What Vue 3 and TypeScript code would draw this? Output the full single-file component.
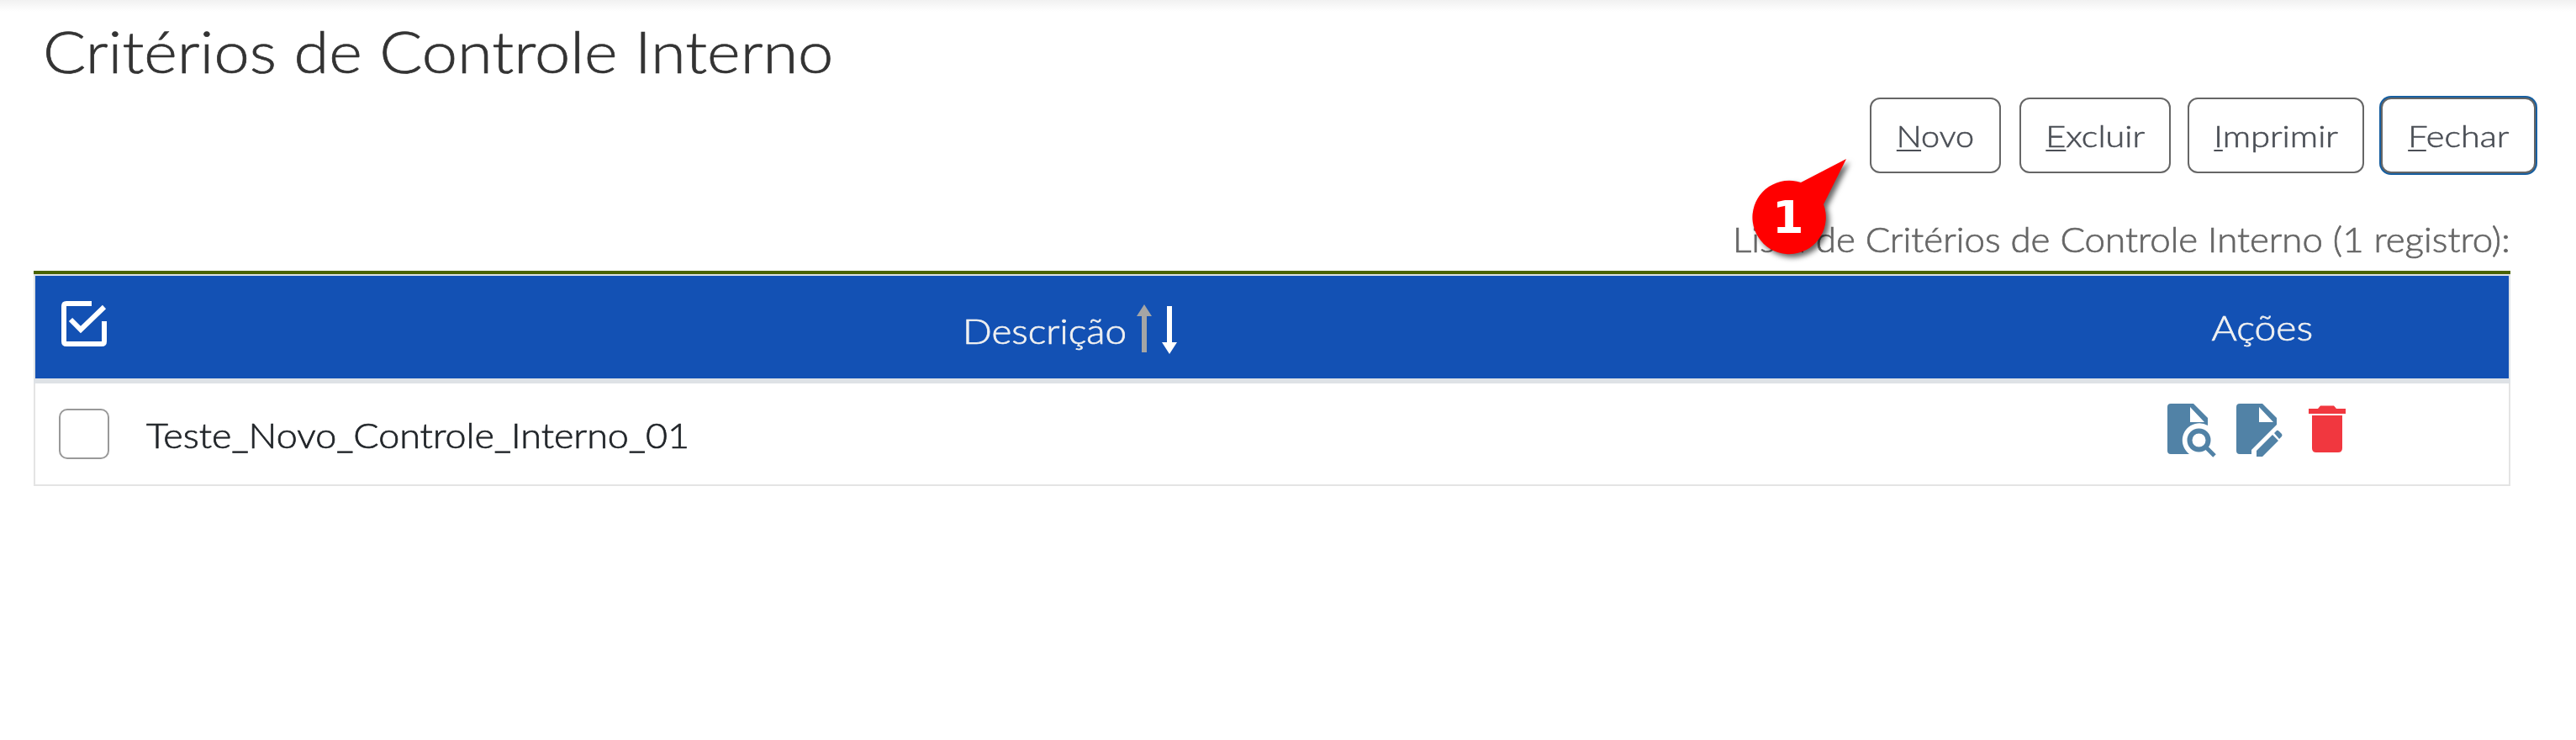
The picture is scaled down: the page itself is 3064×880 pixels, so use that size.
<script setup lang="ts">
interface ToolbarAction { key: string; rest: string; focused?: boolean }
const actions: ToolbarAction[] = [
  { key: 'N', rest: 'ovo' },
  { key: 'E', rest: 'xcluir' },
  { key: 'I', rest: 'mprimir' },
  { key: 'F', rest: 'echar', focused: true },
]
const rows: string[] = ['Teste_Novo_Controle_Interno_01']
</script>

<template>
  <main class="page">
    <h1><span class="title">Critérios de Controle Interno</span></h1>
    <div class="toolbar">
      <button v-for="a in actions" :key="a.key" :class="['btn', 'btn-' + a.key, { focused: a.focused }]"><span class="label"><u>{{ a.key }}</u>{{ a.rest }}</span></button>
    </div>
    <div class="count"><span class="count-text">Lista de Critérios de Controle Interno (1 registro):</span></div>
    <section class="table">
      <div class="row head">
        <div class="c1">
          <svg class="check" width="56" height="56" viewBox="0 0 56 56" fill="none" stroke="#fff" stroke-width="6"><path d="M37 4H7Q4 4 4 7V49Q4 52 7 52H49Q52 52 52 49V25" /><path d="M12 23L24 35L52 8" /></svg>
        </div>
        <div class="c2 center"><span class="desc">Descrição</span>
          <svg class="sort" width="52" height="62" viewBox="0 0 52 62"><path d="M10 1L19 15H13V58H7V15H1Z" fill="#a5a5a5" /><path d="M40 60L49 46H43V3H37V46H31Z" fill="#fff" /></svg>
        </div>
        <div class="c3 center"><span class="acoes">Ações</span></div>
      </div>
      <div v-for="r in rows" :key="r" class="row body">
        <div class="c1"><span class="box"></span></div>
        <div class="c2"><span class="name">{{ r }}</span></div>
        <div class="c3 icons">
          <svg width="58" height="64" viewBox="0 0 58 64" fill="#5182a6"><path fill-rule="evenodd" d="M4 0H31L48 17V26Q41 22 33 24C17 28 12 49 26 60H4Q0 60 0 56V4Q0 0 4 0ZM27 4V22H44Z" /><circle cx="37.500" cy="43.500" r="11" fill="none" stroke="#5182a6" stroke-width="6" /><path d="M45 51L56 62" stroke="#5182a6" stroke-width="5" /></svg>
          <svg width="56" height="64" viewBox="0 0 56 64" fill="#5182a6"><path fill-rule="evenodd" d="M4 0H31L48 17V25L18 55V60H4Q0 60 0 56V4Q0 0 4 0ZM27 4V22H44Z" /><path d="M24 56L43 37L50 44L31 63H24ZM45 35L48 32Q49 31 51 33L54 36Q55 38 54 39L51 42Z" /></svg>
          <svg class="trash" width="44" height="64" viewBox="0 0 44 64" fill="#f1373f"><path d="M0 6H11L14 2.500H30L33 6H44V12H0ZM4 14H40V53Q40 58 35 58H9Q4 58 4 53Z" /></svg>
        </div>
      </div>
    </section>
    <div class="callout">
      <svg width="130" height="140" viewBox="0 0 130 140"><path d="M55 29L109 1L82 55A43.700 43.700 0 1 1 55 29Z" fill="#f00" /></svg>
      <span class="num">1</span>
    </div>
  </main>
</template>

<style>
body { margin: 0; background: #fff; }
</style>
<style scoped>
.page { position: relative; width: 3064px; height: 880px; overflow: hidden; box-sizing: border-box; font-family: Lato, "Open Sans", sans-serif; font-weight: 300; background: linear-gradient(#f1f1f1, #fff 14px); color: #212529; }
h1 { margin: 0; padding: 18px 0 0 51px; height: 96px; box-sizing: border-box; font-size: 69px; font-weight: 300; line-height: 86px; color: #333; white-space: nowrap; -webkit-text-stroke: 0.7px currentColor; }
.title, .label, .count-text, .desc, .acoes, .name { display: inline-block; }
.title { transform: scaleX(1.098); transform-origin: left; }
.label { transform: scaleX(1.15); }
.btn-N .label { transform: scaleX(1.1); }
.count-text { transform: scaleX(1.044); transform-origin: right; }
.toolbar { display: flex; justify-content: flex-end; gap: 20px; padding: 20px 48px 0 0; }
.btn { box-sizing: border-box; width: 156px; height: 90px; padding: 0 0 1px; border: 2px solid #666; border-radius: 12px; background: #fff; font: 300 36px/86px Lato, sans-serif; color: #4b4f56; -webkit-text-stroke: 0.6px currentColor; }
.btn-N { margin-right: 2px; }
.btn-E { width: 180px; }
.btn-I { width: 210px; }
.btn-F { width: 184px; }
.btn u { text-decoration-thickness: 2px; text-underline-offset: 3px; text-decoration-skip-ink: none; }
.focused { box-shadow: 0 0 0 2px #175fa0; }
.count { height: 116px; padding-right: 78px; text-align: right; box-sizing: border-box; padding-top: 52px; font-size: 42px; line-height: 52px; color: #666; -webkit-text-stroke: 0.7px currentColor; }
.table { width: 2946px; margin-left: 40px; box-sizing: border-box; border-top: 4px solid #4a6300; font-size: 42px; -webkit-text-stroke: 0.7px currentColor; }
.row { display: grid; grid-template-columns: 102px 2254px 1fr; align-items: center; box-sizing: border-box; border: 2px solid #e4e4e4; }
.head { height: 130px; background: #1351b4; background-clip: padding-box; color: #f1f1f1; border-color: #dee2e6; border-bottom-width: 6px; }
.body { height: 122px; border-top: 0; background: #fff; }
.c1 { padding-left: 28px; height: 60px; display: flex; align-items: center; }
.check { margin: 0 0 8px 2px; }
.center { display: flex; align-items: center; justify-content: center; }
.head .c2 { padding-left: 14px; }
.desc { transform: scaleX(1.09); margin-top: 7px; }
.acoes { transform: scaleX(1.1); }
.sort { margin: 5px 0 0 20px; }
.box { width: 60px; height: 60px; box-sizing: border-box; border: 2px solid #999; border-radius: 10px; }
.name { margin: 2px 0 0 30px; transform: scaleX(1.067); transform-origin: left; }
.icons { display: flex; padding: 0 0 8px 180px; }
.icons svg + svg { margin-left: 24px; }
.icons .trash { margin-left: 30px; }
.callout { position: absolute; left: 2087px; top: 188px; width: 130px; height: 140px; }
.callout svg { position: absolute; left: 0; top: 0; overflow: visible; filter: drop-shadow(4px 4px 3px rgba(0,0,0,.6)); }
.num { position: absolute; left: 21px; top: 38px; font: 700 54px/66px "DejaVu Sans", sans-serif; color: #fff; }
</style>
